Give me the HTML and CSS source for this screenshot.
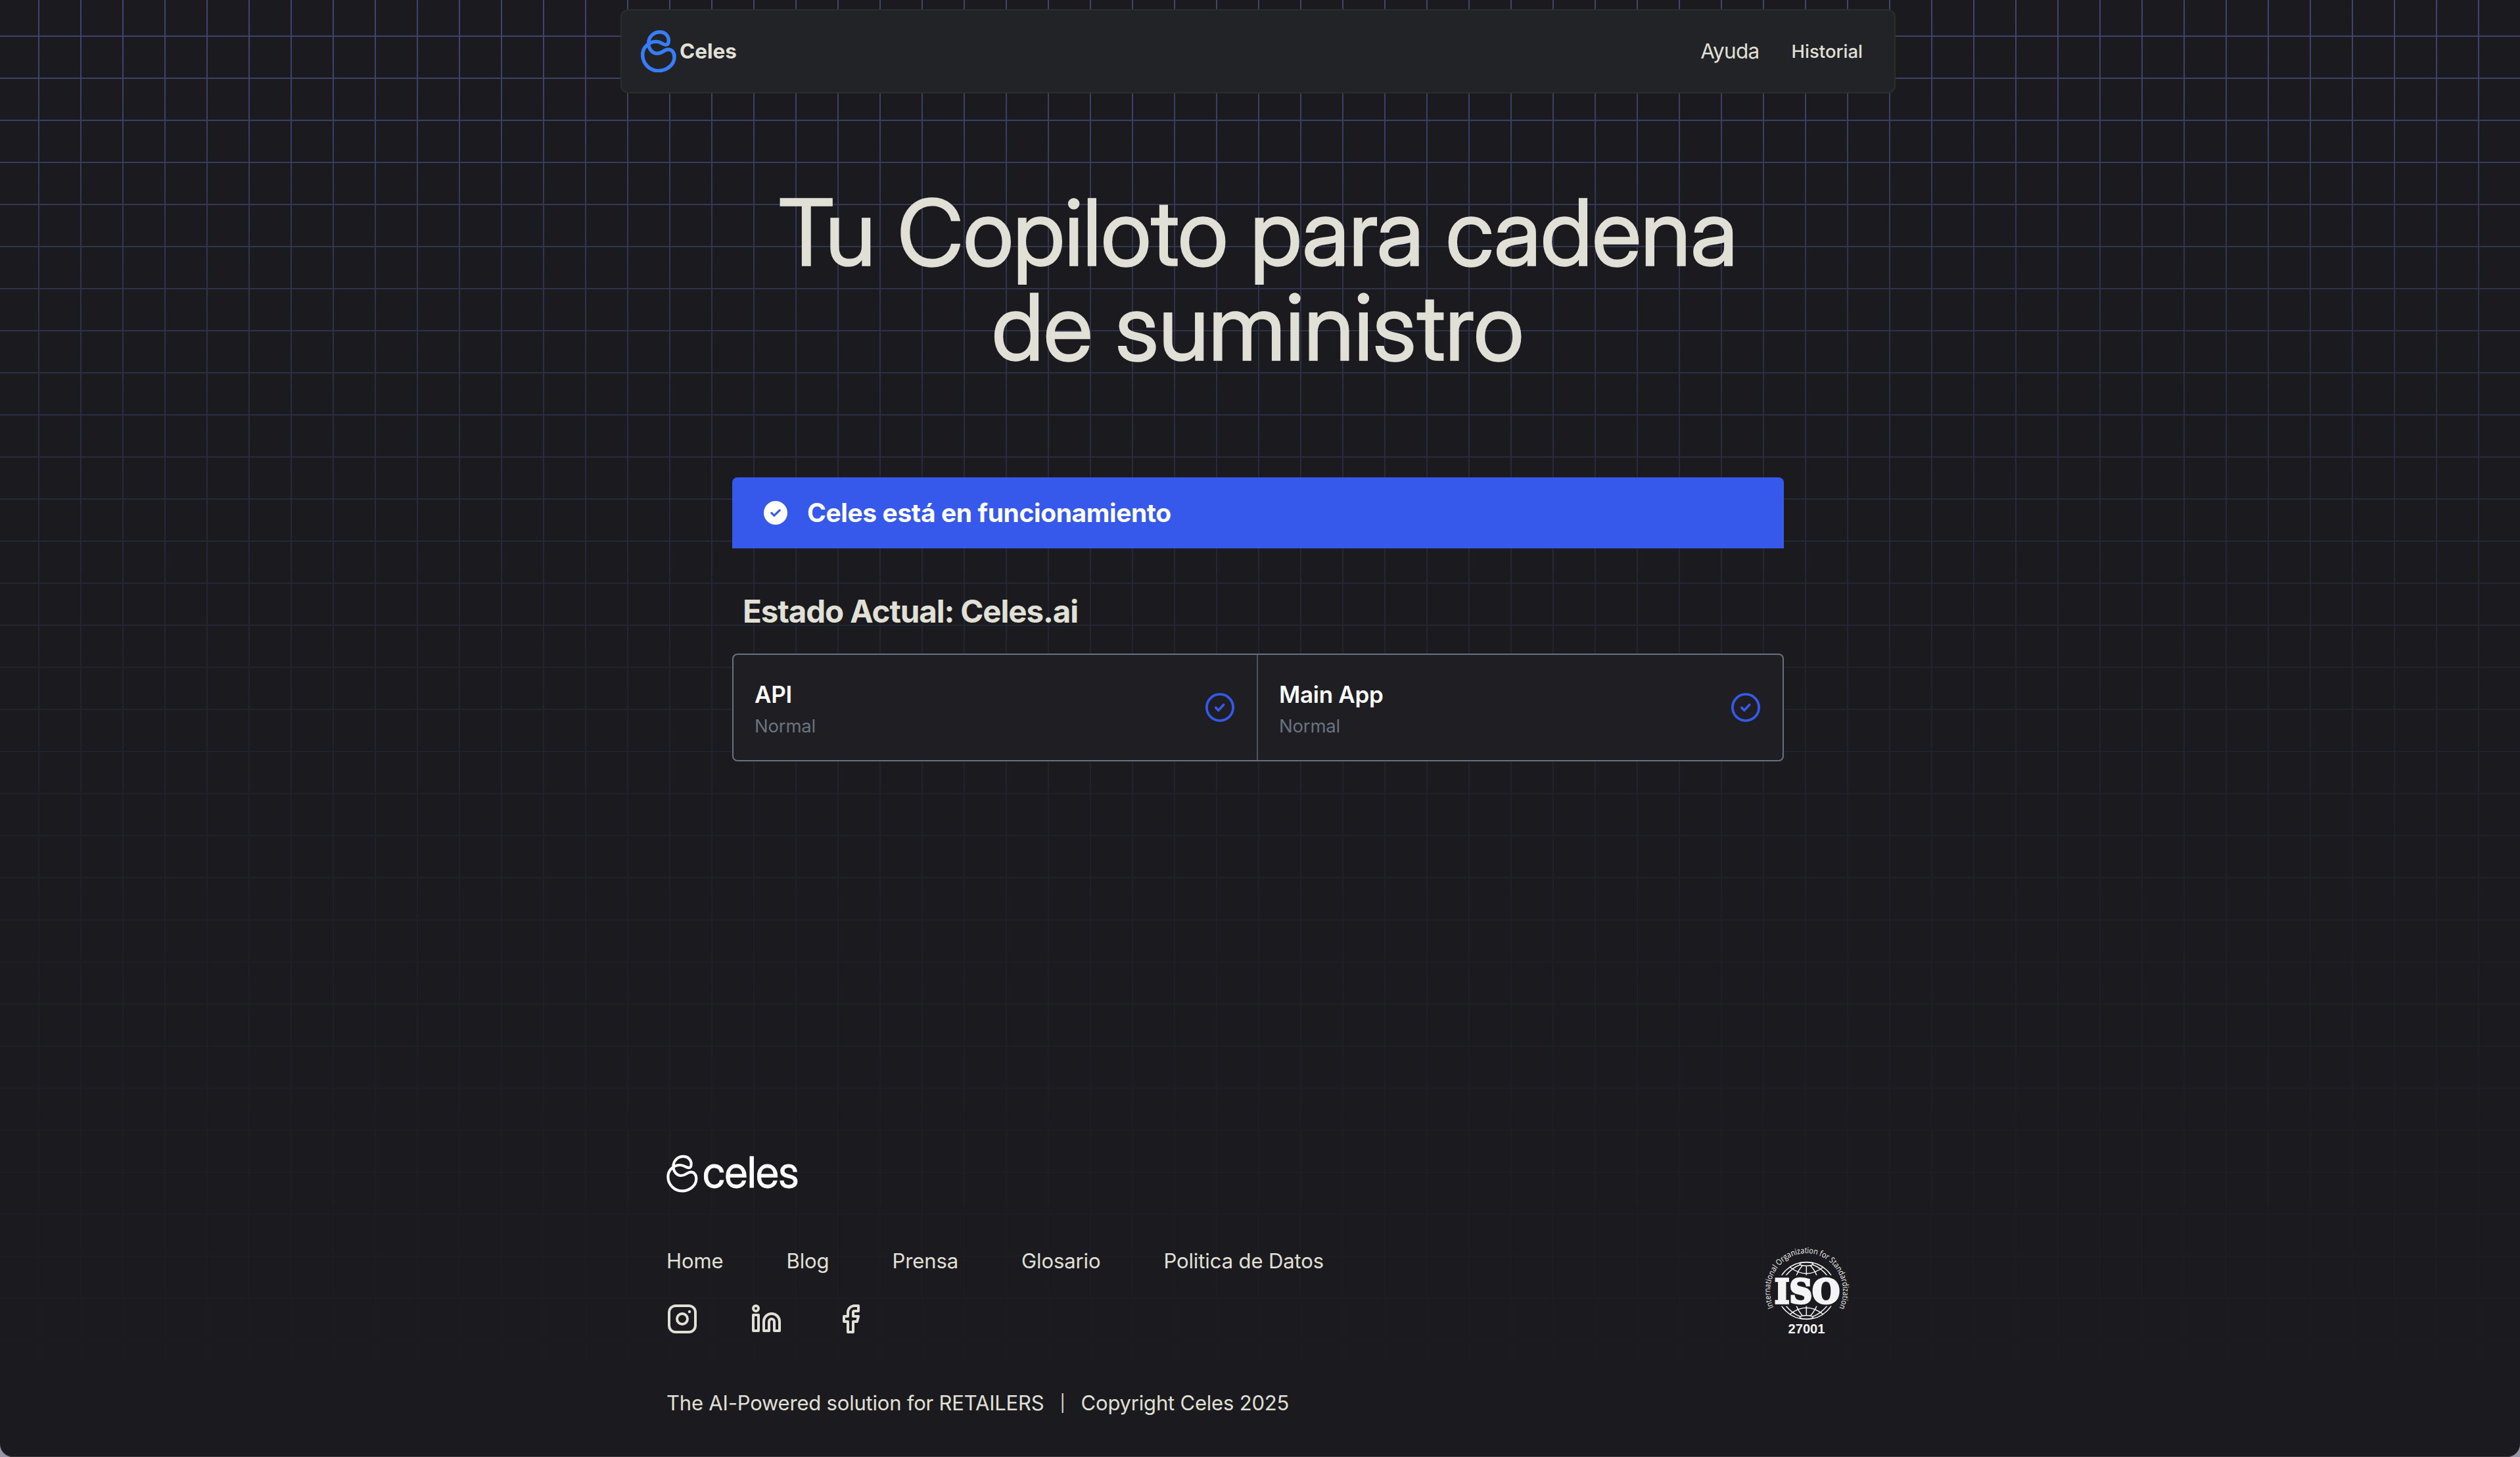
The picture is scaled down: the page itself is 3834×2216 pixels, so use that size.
FILE: index.html
```html
<!DOCTYPE html>
<html lang="es">
<head>
<meta charset="utf-8">
<title>Celes – Estado</title>
<link rel="stylesheet" href="styles.css">
</head>
<body>
<svg class="sprite" aria-hidden="true">
  <symbol id="mark" viewBox="0 0 162 192">
    <path d="M87 8C112 8 127 27 127 46C127 60 122 66 114 66C100 66 92 52 70 52C34 52 8 80 8 112C8 152 40 185 80 185C120 185 153 156 153 122C153 101 141 88 126 88C106 88 98 106 75 106C52 106 35 84 35 60C35 30 58 8 87 8Z" fill="none" stroke="currentColor"/>
  </symbol>
</svg>
<div class="page">
  <header class="nav">
    <a class="brand"><svg class="brand-mark"><use href="#mark"/></svg><span class="brand-name">Celes</span></a>
    <nav class="nav-links"><a class="nav-help">Ayuda</a><a class="nav-history">Historial</a></nav>
  </header>
  <main class="main">
    <h1 class="title"><span class="title-line">Tu Copiloto para cadena</span><span class="title-line title-line-last">de suministro</span></h1>
    <section class="banner">
      <svg class="banner-icon" viewBox="0 0 36 36"><circle cx="18" cy="18" r="18" fill="#fff"/><path d="M11.800 18.200l4 4 8.400-8" fill="none" stroke="#3659ec" stroke-width="3.200" stroke-linecap="round" stroke-linejoin="round"/></svg>
      <span class="banner-text">Celes está en funcionamiento</span>
    </section>
    <h2 class="subtitle">Estado Actual: Celes.ai</h2>
    <section class="services">
      <article class="service">
        <div><h3 class="service-name">API</h3><p class="service-state">Normal</p></div>
        <svg class="ok" viewBox="0 0 44 44"><circle cx="22" cy="22" r="20.100"/><path d="M15.800 22.300l4 4 7.800-8.300"/></svg>
      </article>
      <article class="service">
        <div><h3 class="service-name">Main App</h3><p class="service-state">Normal</p></div>
        <svg class="ok" viewBox="0 0 44 44"><circle cx="22" cy="22" r="20.100"/><path d="M15.800 22.300l4 4 7.800-8.300"/></svg>
      </article>
    </section>
  </main>
  <footer class="footer">
    <div class="logo"><svg class="logo-mark"><use href="#mark"/></svg><span class="logo-name">celes</span></div>
    <div class="footer-row">
      <div>
        <nav class="links"><a>Home</a><a>Blog</a><a>Prensa</a><a>Glosario</a><a>Politica de Datos</a></nav>
        <div class="social">
          <svg viewBox="0 0 24 24"><rect x="2" y="2" width="20" height="20" rx="5"/><circle cx="12" cy="12" r="4"/><circle class="dot" cx="17.500" cy="6.500" r="1.100"/></svg>
          <svg viewBox="0 0 24 24"><circle cx="4" cy="4" r="2"/><path d="M2 9h4v12H2zM10 21v-7a6 6 0 0 1 12 0v7h-4v-7a2 2 0 0 0-4 0v7z"/></svg>
          <svg viewBox="0 0 24 24"><path d="M18 2h-3a5 5 0 0 0-5 5v3H7v4h3v8h4v-8h3l1-4h-4V7a1 1 0 0 1 1-1h3z"/></svg>
        </div>
      </div>
      <svg class="iso" viewBox="0 0 130 140">
        <defs>
          <path id="arc" d="M14.500 98.500A55.500 57.500 0 1 1 114.500 98.500L112 104"/>
          <clipPath id="caps"><path d="M0 0H130V49.500H0zM0 96.500H130V140H0z"/></clipPath>
        </defs>
        <text class="iso-ring"><textPath href="#arc" textLength="229" lengthAdjust="spacingAndGlyphs">International Organization for Standardization</textPath></text>
        <g class="globe" clip-path="url(#caps)">
          <ellipse cx="64.300" cy="73" rx="44.500" ry="43.500"/>
          <ellipse cx="64.300" cy="32.500" rx="10" ry="2.800"/>
          <ellipse cx="64.300" cy="113.500" rx="10" ry="2.800"/>
          <path d="M64.300 35V50M58 35Q52 42 49 50M70.600 35Q77 42 80 50M55 33.500Q43 38 33 50M74 33.500Q86 38 96 50M39 37Q64.300 57 90 37M64.300 111V96M58 111Q52 104 49 96M70.600 111Q77 104 80 96M55 112.500Q43 108 33 96M74 112.500Q86 108 96 96M39 109Q64.300 89 90 109"/>
        </g>
        <text class="iso-name" x="65.500" y="91.500" textLength="99" lengthAdjust="spacingAndGlyphs">ISO</text>
        <text class="iso-num" x="64.500" y="138.300" textLength="56" lengthAdjust="spacingAndGlyphs">27001</text>
      </svg>
    </div>
    <p class="legal"><span>The AI-Powered solution for RETAILERS</span><span class="bar">|</span><span>Copyright Celes 2025</span></p>
  </footer>
</div>
</body>
</html>
```
FILE: styles.css
```css
* { box-sizing: border-box; margin: 0; padding: 0; }
html { background: #9896a6; }
body {
  color: #e0e0d7;
  font-family: Inter, "Liberation Sans", sans-serif;
  overflow: hidden;
}
.sprite { position: absolute; width: 0; height: 0; }
.page {
  position: relative;
  isolation: isolate;
  display: flex;
  flex-direction: column;
  align-items: center;
  height: 2216px;
  padding: 14px 6px 0 0;
  background: #1b1a1e;
  border-radius: 0 0 20px 20px;
  box-shadow: inset 0 -1px #403f45;
}
/* Fading blueprint grid behind the content */
.page::before {
  content: "";
  position: absolute;
  inset: 0;
  z-index: -1;
  background-image:
    linear-gradient(to right, #40456f 2px, transparent 2px),
    linear-gradient(to bottom, #40456f 2px, transparent 2px);
  background-size: 64px 64px;
  background-position: 58px 54px;
  -webkit-mask-image: linear-gradient(#000 0, rgba(0,0,0,.88) 180px, rgba(0,0,0,.67) 330px, rgba(0,0,0,.48) 565px, rgba(0,0,0,.27) 900px, rgba(0,0,0,.15) 1300px, rgba(0,0,0,.08) 1700px, rgba(0,0,0,.04) 2077px, transparent 2077px);
  mask-image: linear-gradient(#000 0, rgba(0,0,0,.88) 180px, rgba(0,0,0,.67) 330px, rgba(0,0,0,.48) 565px, rgba(0,0,0,.27) 900px, rgba(0,0,0,.15) 1300px, rgba(0,0,0,.08) 1700px, rgba(0,0,0,.04) 2077px, transparent 2077px);
}
.nav {
  display: flex;
  justify-content: space-between;
  align-items: center;
  width: 1940px;
  height: 128px;
  padding: 0 48px 0 29px;
  background: #212326;
  border: 2px solid #2d2d2c;
  border-radius: 12px;
}
.brand { display: flex; align-items: center; gap: 5px; }
.brand-mark { width: 54px; height: 64px; color: #387df5; stroke-width: 16.5; }
.brand-name { font-size: 31.500px; font-weight: 700; line-height: 48px; }
.nav-links { display: flex; align-items: center; gap: 49px; }
.nav-help { font-size: 31.500px; line-height: 48px; letter-spacing: -.7px; }
.nav-history { font-size: 27.500px; font-weight: 500; line-height: 40px; }
.main { display: flex; flex-direction: column; width: 1600px; }
.title {
  margin-top: 139px;
  padding-right: 1px;
  font-family: "Inter Display", Inter, "Liberation Sans", sans-serif;
  font-size: 140px;
  font-weight: 400;
  line-height: 144px;
  text-align: center;
  white-space: nowrap;
  -webkit-text-stroke: 1.500px #e0e0d7;
}
.title-line { display: block; letter-spacing: -1px; }
.title-line-last { letter-spacing: -.500px; }
.banner {
  display: flex;
  align-items: center;
  gap: 30px;
  height: 108px;
  margin-top: 157px;
  padding-left: 48px;
  background: #3659ec;
  border-radius: 8px 8px 0 0;
  color: #fff;
}
.banner-icon { flex: none; width: 36px; height: 36px; }
.banner-text { font-size: 39px; font-weight: 700; line-height: 56px; letter-spacing: -.4px; }
.subtitle { margin: 64px 0 0 16px; font-size: 47.500px; font-weight: 700; line-height: 64px; letter-spacing: -1.100px; }
.services {
  display: grid;
  grid-template-columns: 796px 1fr;
  height: 164px;
  margin-top: 32px;
  background: #1f1e22;
  border: 2px solid #6b7080;
  border-radius: 8px;
}
.service {
  display: flex;
  justify-content: space-between;
  align-items: center;
  padding: 0 34px 0 32px;
}
.service + .service { border-left: 2px solid #4b5563; }
.service-name { color: #fff; font-size: 35px; font-weight: 600; line-height: 56px; letter-spacing: -.3px; }
.service-state { color: #6b7280; font-size: 27.500px; line-height: 40px; letter-spacing: -.2px; }
.ok { width: 44px; height: 44px; fill: none; stroke: #3659ec; stroke-width: 3.800; stroke-linecap: round; stroke-linejoin: round; }
.footer { width: 1800px; margin-top: 598px; }
.logo { display: flex; height: 58px; align-items: center; gap: 7px; color: #fff; }
.logo-mark { width: 48px; height: 58px; stroke-width: 14; }
.logo-name { font-family: "Inter Display", Inter, sans-serif; font-size: 65px; font-weight: 400; line-height: 58px; letter-spacing: -.4px; padding-bottom: 5px; -webkit-text-stroke: .8px #fff; }
.footer-row { display: flex; justify-content: space-between; margin-top: 76px; }
.links { display: flex; gap: 96px; margin-top: 4px; font-size: 31px; line-height: 48px; letter-spacing: -.1px; white-space: nowrap; }
.social { display: flex; gap: 80px; margin-top: 40px; }
.social svg { width: 48px; height: 48px; fill: none; stroke: #e0e0d7; stroke-width: 2; stroke-linejoin: round; stroke-linecap: round; }
.social .dot { fill: #e0e0d7; stroke: none; }
.iso { width: 130px; height: 140px; overflow: visible; fill: #f4f4f4; }
.iso-ring { font: 12.500px "Open Sans", sans-serif; }
.globe { fill: none; stroke: #f4f4f4; stroke-width: 1.500; }
.iso-name { font: 900 51px "DejaVu Serif", serif; text-anchor: middle; stroke: #f4f4f4; stroke-width: 3.500; }
.iso-num { font: 700 21px "Liberation Sans", sans-serif; text-anchor: middle; }
.legal { display: flex; align-items: center; margin-top: 80px; font-size: 31px; line-height: 48px; letter-spacing: -.2px; white-space: pre; }
.bar { margin: 0 24px; font-size: 25px; }
```
